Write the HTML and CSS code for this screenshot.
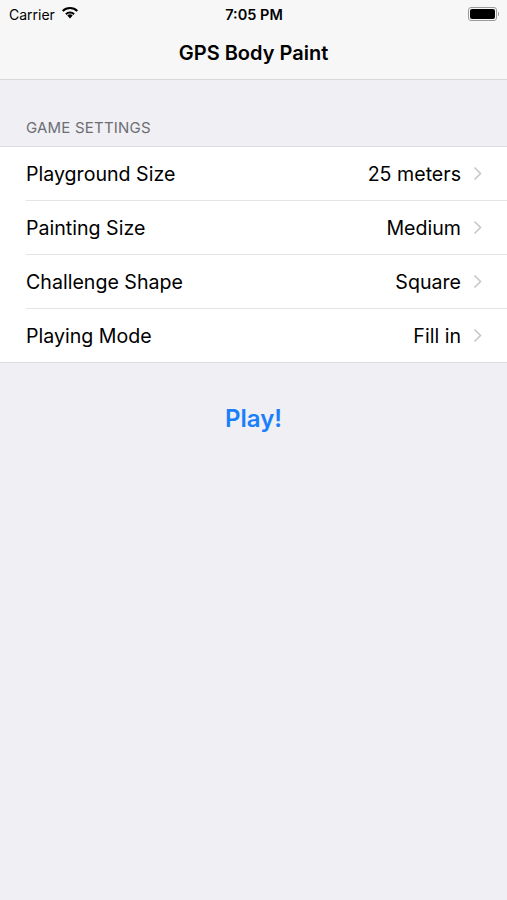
FILE: index.html
```html
<!DOCTYPE html>
<html>
<head>
<meta charset="utf-8">
<link rel="stylesheet" href="styles.css">
</head>
<body>
<div class="top">
  <div class="status">
    <div class="status-left">
      <span>Carrier</span>
      <svg class="wifi" width="18" height="13" viewBox="0 0 18 13">
        <path d="M9 12.5 L6.3 9.6 A3.9 3.9 0 0 1 11.7 9.6 Z" fill="#000"/>
        <path d="M4.2 7.5 A6.8 6.8 0 0 1 13.8 7.5 L12.4 8.9 A4.9 4.9 0 0 0 5.6 8.9 Z" fill="#000"/>
        <path d="M1 4.3 A11.3 11.3 0 0 1 17 4.3 L15.6 5.7 A9.3 9.3 0 0 0 2.4 5.7 Z" fill="#000"/>
      </svg>
    </div>
    <div class="time">7:05 PM</div>
    <div class="status-right">
      <div class="battery"><div class="battery-fill"></div></div>
      <div class="battery-tip"></div>
    </div>
  </div>
  <div class="nav">GPS Body Paint</div>
</div>
<div class="section-header">GAME SETTINGS</div>
<div class="table">
  <div class="row"><span class="label">Playground Size</span><span class="value">25 meters</span><span class="chev"><svg width="9" height="15" viewBox="0 0 9 15"><path d="M1.5 1.5 L7.5 7.5 L1.5 13.5" fill="none" stroke="#c7c7cc" stroke-width="1.6"/></svg></span></div>
  <div class="row"><span class="label">Painting Size</span><span class="value">Medium</span><span class="chev"><svg width="9" height="15" viewBox="0 0 9 15"><path d="M1.5 1.5 L7.5 7.5 L1.5 13.5" fill="none" stroke="#c7c7cc" stroke-width="1.6"/></svg></span></div>
  <div class="row"><span class="label">Challenge Shape</span><span class="value">Square</span><span class="chev"><svg width="9" height="15" viewBox="0 0 9 15"><path d="M1.5 1.5 L7.5 7.5 L1.5 13.5" fill="none" stroke="#c7c7cc" stroke-width="1.6"/></svg></span></div>
  <div class="row last"><span class="label">Playing Mode</span><span class="value">Fill in</span><span class="chev"><svg width="9" height="15" viewBox="0 0 9 15"><path d="M1.5 1.5 L7.5 7.5 L1.5 13.5" fill="none" stroke="#c7c7cc" stroke-width="1.6"/></svg></span></div>
</div>
<div class="play-wrap"><span class="play">Play!</span></div>
</body>
</html>
```
FILE: styles.css
```css
html, body {
  margin: 0;
  padding: 0;
}
body {
  width: 507px;
  height: 900px;
  background: #efeff4;
  font-family: Inter, "Liberation Sans", sans-serif;
  color: #000;
  overflow: hidden;
}
.top {
  background: #f7f7f7;
  border-bottom: 1px solid #d8d8da;
}
.status {
  height: 28px;
  display: flex;
  align-items: center;
  justify-content: space-between;
  padding: 0 8px 0 9px;
  font-size: 14px;
}
.status-left {
  display: flex;
  align-items: center;
  gap: 6px;
  width: 120px;
}
.wifi {
  margin-top: -3px;
}
.time {
  font-weight: 600;
  font-size: 14.5px;
}
.status-right {
  width: 120px;
  display: flex;
  justify-content: flex-end;
  align-items: center;
}
.battery {
  width: 25px;
  height: 10px;
  border: 1px solid #9a9a9a;
  border-radius: 3px;
  padding: 1px;
  box-sizing: content-box;
}
.battery-fill {
  width: 100%;
  height: 100%;
  background: #000;
  border-radius: 2px;
}
.battery-tip {
  width: 1.5px;
  height: 4px;
  background: #9a9a9a;
  margin-left: 1px;
  border-radius: 0 1px 1px 0;
}
.nav {
  height: 51px;
  display: flex;
  align-items: center;
  justify-content: center;
  font-size: 20px;
  font-weight: 600;
  padding-bottom: 2px;
  box-sizing: border-box;
}
.section-header {
  padding: 38px 26px 9px;
  font-size: 15px;
  color: #6d6d72;
  letter-spacing: 0.2px;
}
.table {
  background: #fff;
  border-top: 1px solid #dcdce0;
  border-bottom: 1px solid #dcdce0;
}
.row {
  height: 53px;
  display: flex;
  align-items: center;
  margin-left: 26px;
  padding-right: 25px;
  border-bottom: 1px solid #e4e4e8;
  font-size: 19.6px;
}
.row.last {
  border-bottom: none;
}
.label {
  flex: 1;
}
.value {
  color: #000;
}
.chev {
  display: flex;
  margin-left: 12px;
}
.play-wrap {
  display: flex;
  justify-content: center;
  padding-top: 41px;
}
.play {
  color: #1a7ffb;
  font-size: 24px;
  font-weight: 600;
}
```
